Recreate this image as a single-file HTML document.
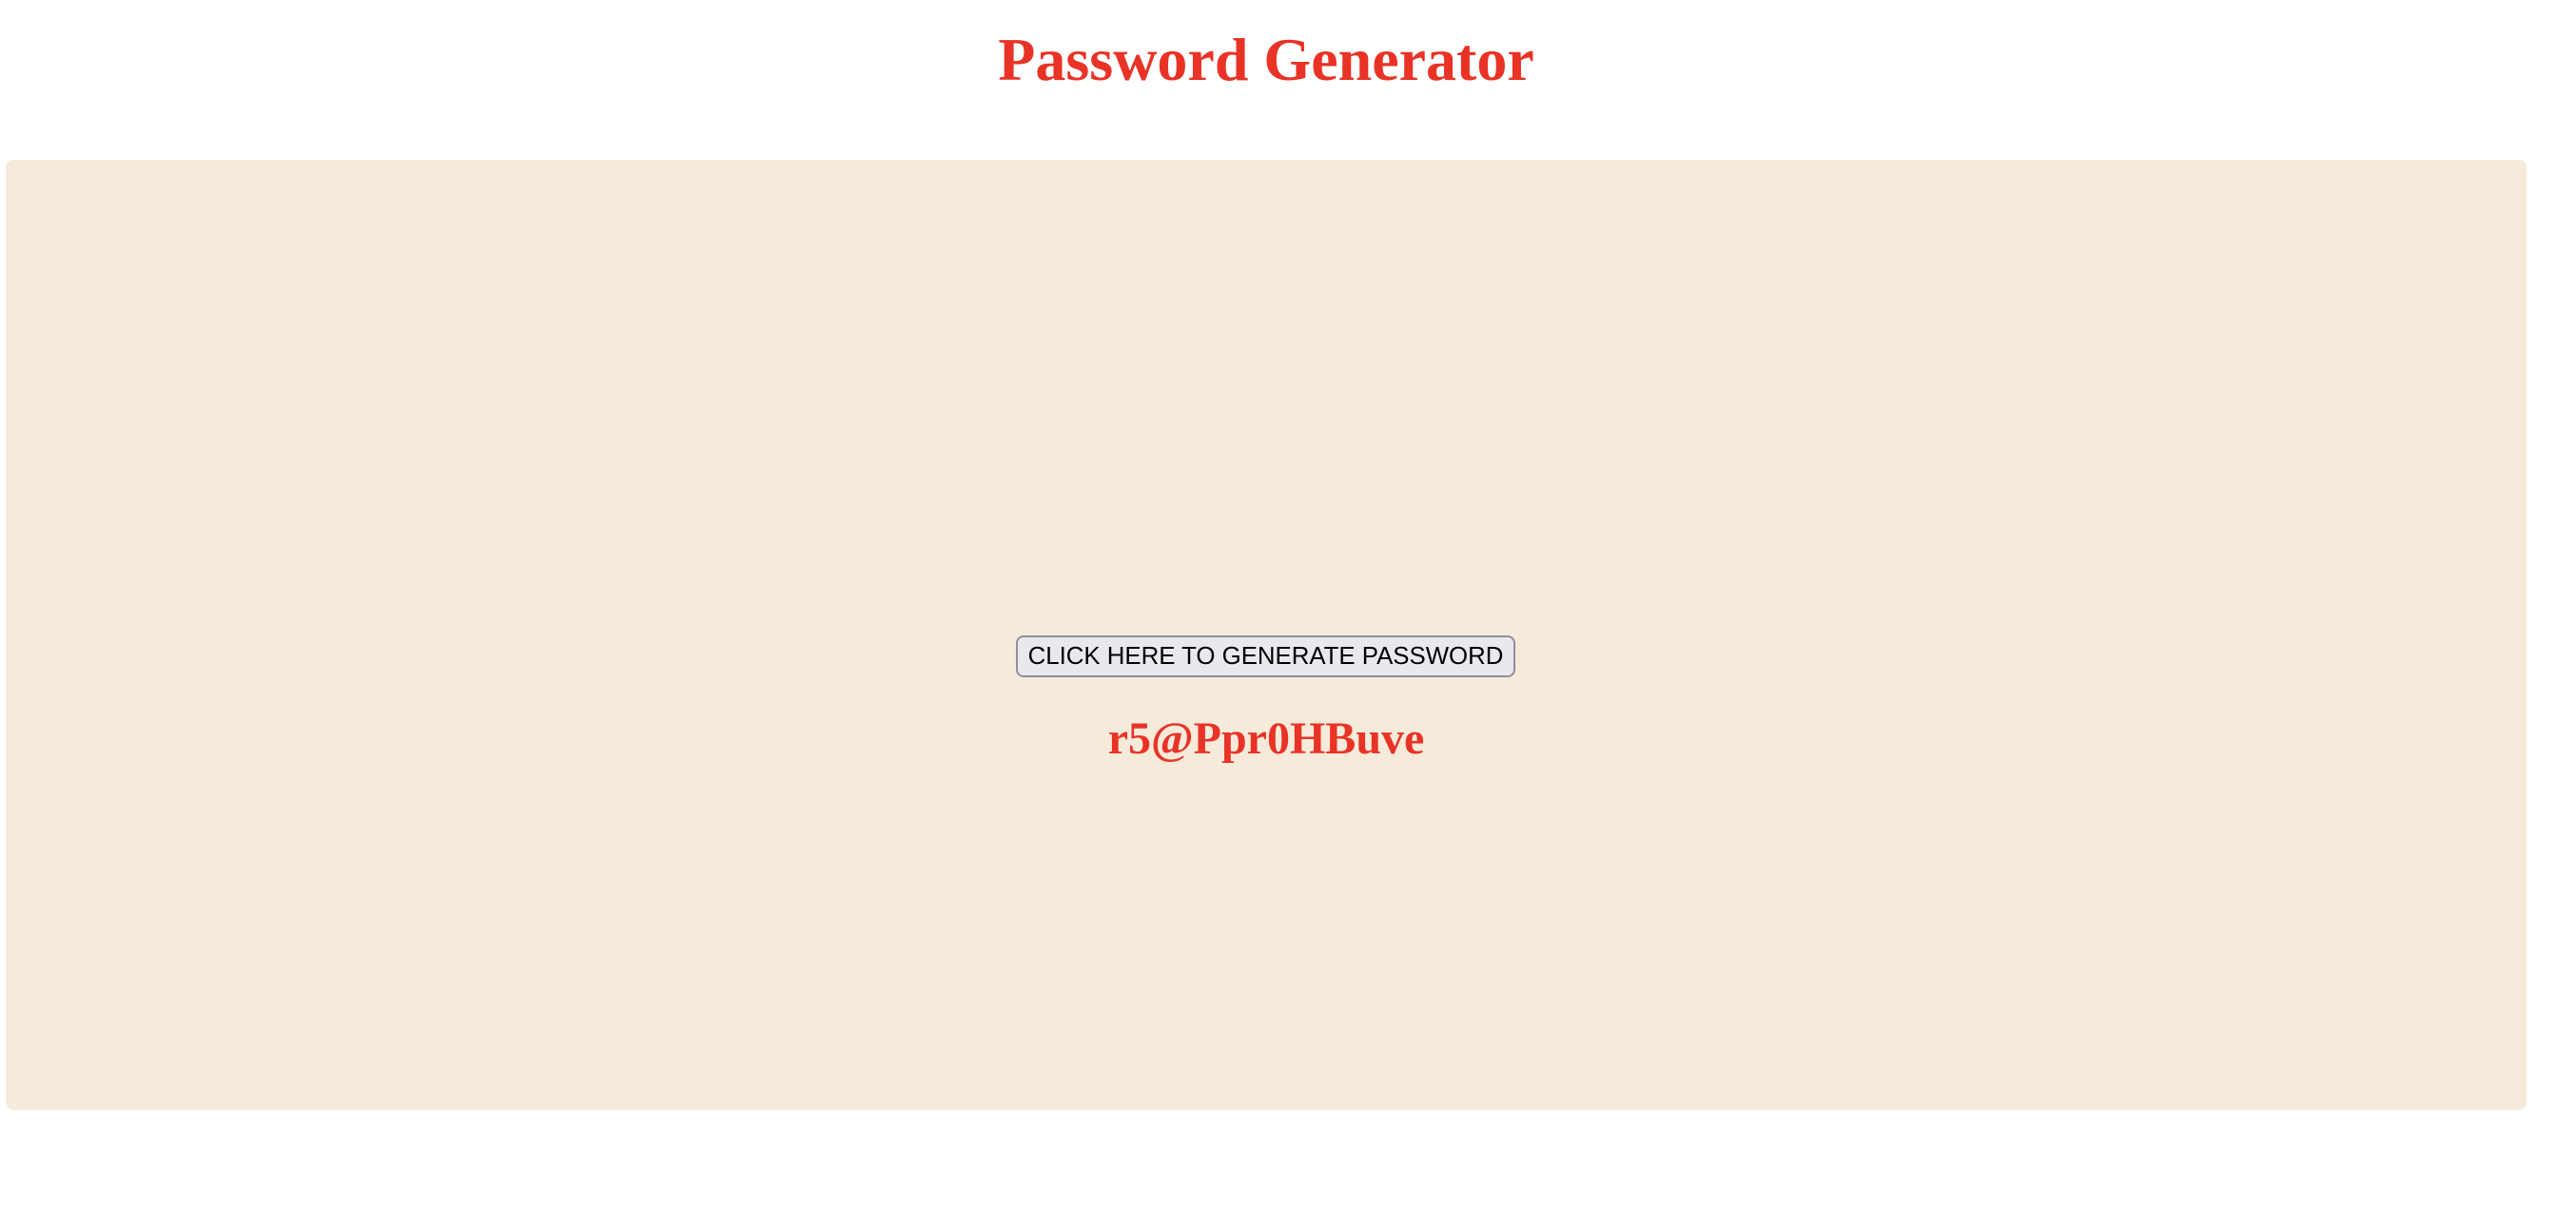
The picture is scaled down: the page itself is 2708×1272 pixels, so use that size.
<!DOCTYPE html>
<html><head><meta charset="utf-8"><style>
html,body{margin:0;padding:0;background:#fff;width:2708px;height:1272px;overflow:hidden;position:relative}
.t{position:absolute;left:0;width:2662px;text-align:center;font-family:"Liberation Serif",serif;font-weight:bold;color:#e83326;white-space:nowrap;line-height:1}
.panel{position:absolute;left:6px;top:168px;width:2650px;height:999px;background:#f6ebdb;border-radius:8px}
.btn{position:absolute;left:1068px;top:668px;width:525px;height:44px;box-sizing:border-box;background:#e9e9ed;border:2px solid #8f8f9d;border-radius:8px;font-family:"Liberation Sans",sans-serif;font-size:25.8px;color:#000;text-align:center;line-height:40px;white-space:nowrap}
</style></head><body>
<div class="t" style="top:31px;font-size:64px;height:64px">Password Generator</div>
<div class="panel"></div>
<div class="btn">CLICK HERE TO GENERATE PASSWORD</div>
<div class="t" style="top:753px;font-size:48px;height:48px">r5@Ppr0HBuve</div>
</body></html>
